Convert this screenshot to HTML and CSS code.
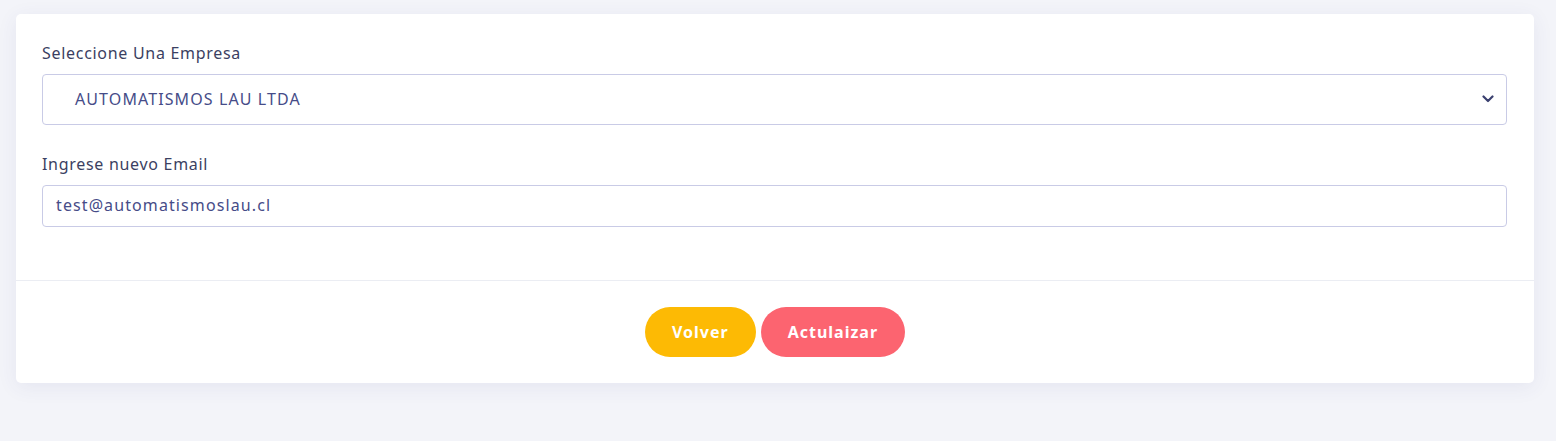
FILE: index.html
```html
<!DOCTYPE html>
<html lang="es">
<head>
<meta charset="utf-8">
<title>Actualizar Email</title>
<link rel="stylesheet" href="styles.css">
</head>
<body>
<div class="card">
  <div class="card-body">
    <div class="field">
      <label class="label">Seleccione Una Empresa</label>
      <div class="select">
        <span class="select-text">AUTOMATISMOS LAU LTDA</span>
        <svg class="chev" width="12" height="8" viewBox="0 0 12 8"><path d="M1.5 1.5 L6 6 L10.5 1.5" fill="none" stroke="#3b4170" stroke-width="2.2" stroke-linecap="round" stroke-linejoin="round"/></svg>
      </div>
    </div>
    <div class="field">
      <label class="label">Ingrese nuevo Email</label>
      <div class="input">test@automatismoslau.cl</div>
    </div>
  </div>
  <div class="card-footer">
    <button class="btn btn-warning">Volver</button>
    <button class="btn btn-danger">Actulaizar</button>
  </div>
</div>
</body>
</html>
```
FILE: styles.css
```css
html, body {
  margin: 0;
  padding: 0;
}
body {
  background: #f3f4f9;
  font-family: "Noto Sans", "Open Sans", sans-serif;
  padding: 14px 22px 0 16px;
  height: 441px;
  box-sizing: border-box;
}
.card {
  background: #fff;
  border-radius: 5px;
  box-shadow: 0 4px 20px rgba(60, 70, 140, 0.08);
}
.card-body {
  padding: 29px 27px 53px 26px;
  display: flex;
  flex-direction: column;
  gap: 29px;
}
.field {
  display: flex;
  flex-direction: column;
  gap: 11px;
}
.label {
  font-size: 16px;
  letter-spacing: 0.7px;
  color: #3b3f62;
  line-height: 20px;
}
.select {
  height: 51px;
  box-sizing: border-box;
  border: 1px solid #c9cbe6;
  border-radius: 4px;
  display: flex;
  align-items: center;
  justify-content: space-between;
  padding: 0 12px 2px 32px;
}
.select-text {
  font-size: 16px;
  letter-spacing: 1.1px;
  color: #464c88;
}
.chev {
  display: block;
}
.input {
  height: 42px;
  box-sizing: border-box;
  border: 1px solid #c9cbe6;
  border-radius: 4px;
  display: flex;
  align-items: center;
  padding: 0 14px 2px 13px;
  font-size: 16px;
  letter-spacing: 1.1px;
  color: #464c88;
}
.card-footer {
  border-top: 1px solid #ebedf3;
  padding: 26px 0 26px;
  display: flex;
  justify-content: center;
  gap: 5px;
}
.btn {
  height: 50px;
  border: none;
  border-radius: 25px;
  color: #fff;
  font-family: "Noto Sans", "Open Sans", sans-serif;
  font-size: 16px;
  font-weight: 700;
  letter-spacing: 1px;
  padding: 0 27px;
  cursor: pointer;
}
.btn-warning {
  background: #fdba04;
}
.btn-danger {
  background: #fc6470;
}
```
